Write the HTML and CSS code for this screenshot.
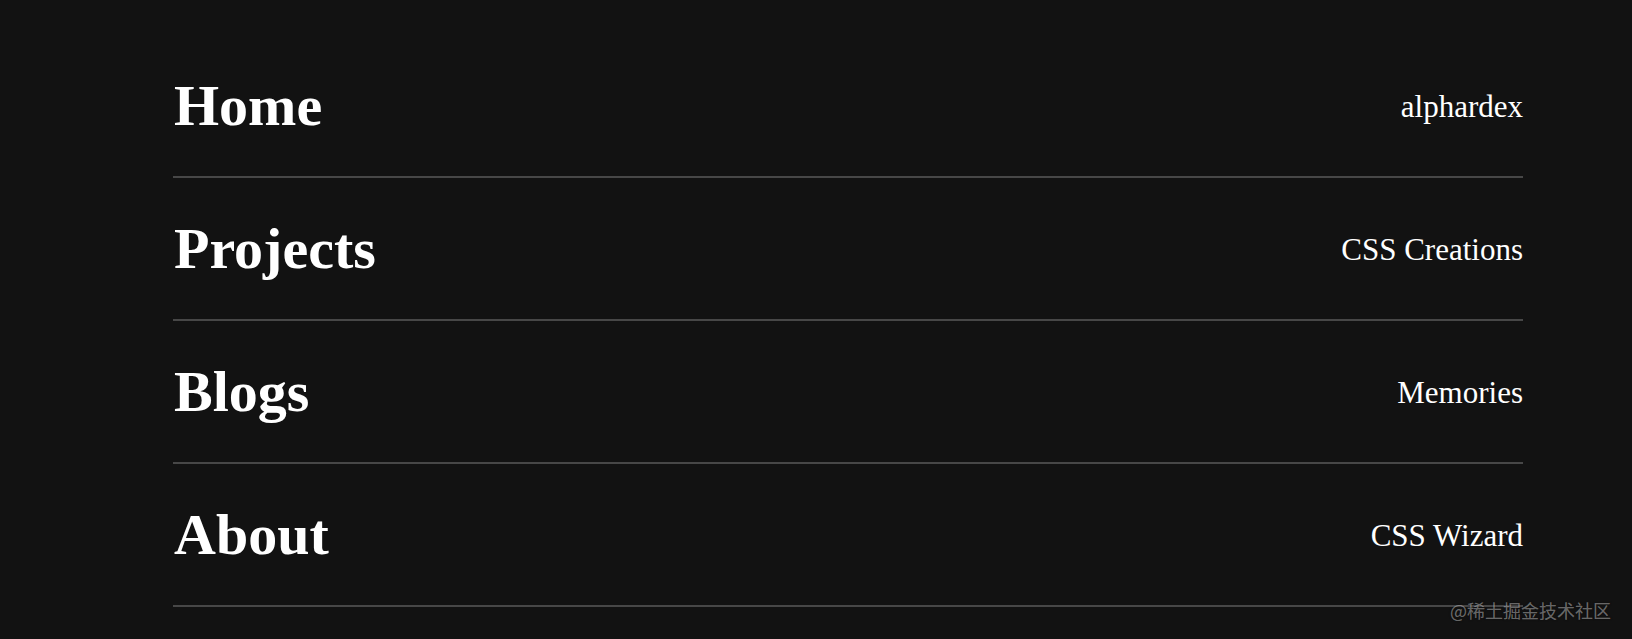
FILE: index.html
```html
<!DOCTYPE html>
<html lang="en">
<head>
    <meta charset="UTF-8">
    <meta name="viewport" content="width=device-width, initial-scale=1.0">
    <title>Menu</title>
    <link rel="stylesheet" href="styles.css">
</head>
<body>
    <nav class="menu">
        <a class="menu-item" href="#">
            <span class="menu-title">Home</span>
            <span class="menu-sub">alphardex</span>
        </a>
        <a class="menu-item" href="#">
            <span class="menu-title">Projects</span>
            <span class="menu-sub">CSS Creations</span>
        </a>
        <a class="menu-item" href="#">
            <span class="menu-title">Blogs</span>
            <span class="menu-sub">Memories</span>
        </a>
        <a class="menu-item" href="#">
            <span class="menu-title">About</span>
            <span class="menu-sub">CSS Wizard</span>
        </a>
    </nav>

    <!-- watermark from the source screenshot -->
    <div class="watermark">@稀土掘金技术社区</div>
</body>
</html>
```

FILE: styles.css
```css
body {
    margin: 0;
    padding: 0;
    background-color: #121212;
    font-family: "Liberation Serif", serif;
    color: #fff;
    height: 639px;
    overflow: hidden;
}

.menu {
    display: flex;
    flex-direction: column;
    padding: 35px 109px 0 173px;
}

.menu-item {
    display: flex;
    align-items: center;
    justify-content: space-between;
    height: 141px;
    border-bottom: 2px solid #474747;
    color: #fff;
    text-decoration: none;
}

.menu-title {
    font-size: 58px;
    font-weight: bold;
    margin-left: 1px;
}

.menu-sub {
    font-size: 31px;
    margin-top: 2px;
}

.watermark {
    position: absolute;
    right: 21px;
    top: 597px;
    font-family: "Noto Sans CJK SC", sans-serif;
    font-size: 18px;
    color: rgba(255, 255, 255, 0.4);
    text-shadow: 0 0 2px rgba(0, 0, 0, 0.6);
}
```
